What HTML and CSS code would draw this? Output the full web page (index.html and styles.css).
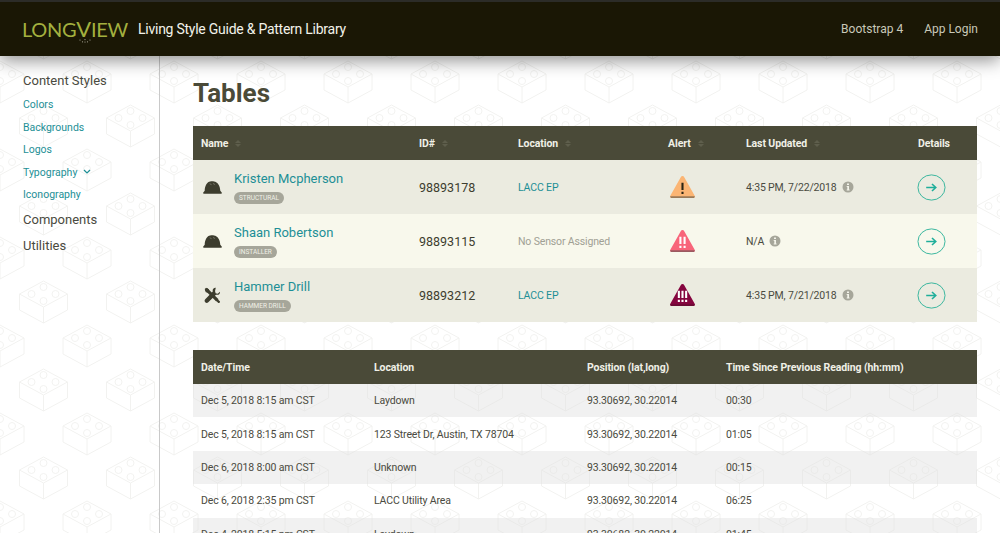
FILE: index.html
```html
<!DOCTYPE html>
<html lang="en">
<head>
<meta charset="utf-8">
<title>Longview Tables</title>
<link rel="stylesheet" href="styles.css">
</head>
<body>
<svg class="defs" width="0" height="0" aria-hidden="true">
  <defs>
    <symbol id="hat" viewBox="0 0 20 14">
      <path d="M1.800 10.500C1.800 5 4.600 1 7.500.7c.5-.4 3.500-.5 4 0C15.500 1.200 18 5 18.200 10.500l1.500 1.800c.4.600.1 1.200-.6 1.200H.9c-.7 0-1-.6-.6-1.200z" fill="#3d3d2e"/>
      <path d="M7 3l2 1M10.500 2.700l2.200 1.200" stroke="#8a8a7c" stroke-width=".7" fill="none"/>
    </symbol>
    <symbol id="tools" viewBox="0 0 18 18">
      <path d="M2.200 2.200l12 12" stroke="#3d3d2e" stroke-width="3.400" fill="none"/>
      <path d="M.8 2.200L2.200.8l3 1.700.3 3-.6.500-3-.4z" fill="#3d3d2e"/>
      <path d="M12.800 11.500l4 3.700c.5 1.200-.5 2.200-1.700 1.700l-3.700-4z" fill="#3d3d2e"/>
      <path d="M12.500.7c-2-.3-3.600 1.300-3.300 3.300l.1.800L1.300 13c-.9.900-.9 2.300 0 3.200.9.900 2.300.9 3.200 0l8.200-8 .9.100c2 .3 3.700-1.400 3.300-3.400l-2.400 2.200-2.200-.6-.6-2.200z" fill="#3d3d2e"/>
    </symbol>
    <symbol id="info" viewBox="0 0 12 12">
      <circle cx="6" cy="6" r="5.500" fill="#a6a69a"/>
      <path d="M5 2.500h2v1.600H5zM4.700 5h2.300v3.500h.6v1H4.700v-1h.6V6h-.6z" fill="#f4f4ea"/>
    </symbol>
    <symbol id="go" viewBox="0 0 30 30" preserveAspectRatio="none">
      <circle cx="15" cy="15" r="14" fill="none" stroke="#2fb39a" stroke-width="1"/>
      <path d="M9.500 15h10M15.500 11l4 4-4 4" fill="none" stroke="#1fae9a" stroke-width="1.600"/>
    </symbol>
  </defs>
</svg>
<div class="app">
  <header class="topbar">
    <a class="logo" href="#">LONG<span class="logo-v">V</span>IEW<svg class="logo-dots" viewBox="0 0 12 4" width="12" height="4"><g fill="#a8a89a"><circle cx="1" cy="1" r=".6"/><circle cx="3.500" cy="2.800" r=".6"/><circle cx="6" cy="3" r=".6"/><circle cx="8.500" cy="2.800" r=".6"/><circle cx="11" cy="1" r=".6"/><circle cx="6" cy=".6" r=".6"/></g></svg></a>
    <span class="tagline">Living Style Guide &amp; Pattern Library</span>
    <nav class="topnav">
      <a href="#">Bootstrap 4</a>
      <a href="#">App Login</a>
    </nav>
  </header>
  <div class="body-row">
    <aside class="sidebar">
      <a class="nav-head" href="#">Content Styles</a>
      <ul class="subnav">
        <li><a href="#">Colors</a></li>
        <li><a href="#">Backgrounds</a></li>
        <li><a href="#">Logos</a></li>
        <li><a href="#">Typography<svg class="chev" viewBox="0 0 8 5" width="8" height="5"><path d="M1 1l3 3 3-3" fill="none" stroke="#1d8f96" stroke-width="1.200"/></svg></a></li>
        <li><a href="#">Iconography</a></li>
      </ul>
      <a class="nav-head" href="#">Components</a>
      <a class="nav-head" href="#">Utilities</a>
    </aside>
    <main class="content">
      <h1>Tables</h1>
      <table class="tbl devices">
        <colgroup><col class="c1"><col class="c2"><col class="c3"><col class="c4"><col class="c5"><col class="c6"></colgroup>
        <thead>
          <tr>
            <th>Name<span class="sort"></span></th>
            <th>ID#<span class="sort"></span></th>
            <th>Location<span class="sort"></span></th>
            <th>Alert<span class="sort"></span></th>
            <th>Last Updated<span class="sort"></span></th>
            <th>Details</th>
          </tr>
        </thead>
        <tbody>
          <tr>
            <td><div class="who"><svg class="who-ico"><use href="#hat"/></svg><div><a class="who-name" href="#">Kristen Mcpherson</a><span class="tag">STRUCTURAL</span></div></div></td>
            <td class="idn">98893178</td>
            <td><a class="loc" href="#">LACC EP</a></td>
            <td><svg class="alert" viewBox="1 1.500 24 21.500"><path d="M13 1.500c.7 0 1.300.4 1.700 1.100l10 17.800c.5 1-.1 2.100-1.200 2.100H2.500c-1.100 0-1.700-1.100-1.200-2.100l10-17.800c.4-.7 1-1.100 1.700-1.100z" fill="#fbb574"/><path d="M1.100 20.800c.2.800.7 2.200 1.900 2.200h20c1.200 0 1.700-1.400 1.900-2.200z" fill="#9a7a58"/><path d="M12 8h2v7h-2zM12 16.500h2v2.200h-2z" fill="#2b2414"/></svg></td>
            <td class="when">4:35 PM, 7/22/2018<svg class="info"><use href="#info"/></svg></td>
            <td><svg class="go"><use href="#go"/></svg></td>
          </tr>
          <tr>
            <td><div class="who"><svg class="who-ico"><use href="#hat"/></svg><div><a class="who-name" href="#">Shaan Robertson</a><span class="tag">INSTALLER</span></div></div></td>
            <td class="idn">98893115</td>
            <td class="none">No Sensor Assigned</td>
            <td><svg class="alert" viewBox="1 1.500 24 21.500"><path d="M13 1.500c.7 0 1.300.4 1.700 1.100l10 17.800c.5 1-.1 2.100-1.200 2.100H2.500c-1.100 0-1.700-1.100-1.200-2.100l10-17.800c.4-.7 1-1.100 1.700-1.100z" fill="#f8657a"/><path d="M1.100 20.800c.2.800.7 2.200 1.900 2.200h20c1.200 0 1.700-1.400 1.900-2.200z" fill="#9a5a60"/><path d="M10 8h2v7h-2zM14 8h2v7h-2zM10 16.500h2v2.200h-2zM14 16.500h2v2.200h-2z" fill="#fff"/></svg></td>
            <td class="when">N/A<svg class="info"><use href="#info"/></svg></td>
            <td><svg class="go"><use href="#go"/></svg></td>
          </tr>
          <tr>
            <td><div class="who"><svg class="who-ico"><use href="#tools"/></svg><div><a class="who-name" href="#">Hammer Drill</a><span class="tag">HAMMER DRILL</span></div></div></td>
            <td class="idn">98893212</td>
            <td><a class="loc" href="#">LACC EP</a></td>
            <td><svg class="alert" viewBox="1 1.500 24 21.500"><path d="M13 1.500c.7 0 1.300.4 1.700 1.100l10 17.800c.5 1-.1 2.100-1.200 2.100H2.500c-1.100 0-1.700-1.100-1.200-2.100l10-17.800c.4-.7 1-1.100 1.700-1.100z" fill="#85053f"/><path d="M1.100 20.800c.2.800.7 2.200 1.900 2.200h20c1.200 0 1.700-1.400 1.900-2.200z" fill="#6b0a35"/><path d="M8.500 8h2v7h-2zM12 8h2v7h-2zM15.500 8h2v7h-2zM8.500 16.500h2v2.200h-2zM12 16.500h2v2.200h-2zM15.500 16.500h2v2.200h-2z" fill="#fff"/></svg></td>
            <td class="when">4:35 PM, 7/21/2018<svg class="info"><use href="#info"/></svg></td>
            <td><svg class="go"><use href="#go"/></svg></td>
          </tr>
        </tbody>
      </table>
      <table class="tbl readings">
        <colgroup><col class="r1"><col class="r2"><col class="r3"><col class="r4"></colgroup>
        <thead>
          <tr><th>Date/Time</th><th>Location</th><th>Position (lat,long)</th><th>Time Since Previous Reading (hh:mm)</th></tr>
        </thead>
        <tbody>
          <tr><td>Dec 5, 2018 8:15 am CST</td><td>Laydown</td><td>93.30692, 30.22014</td><td>00:30</td></tr>
          <tr><td>Dec 5, 2018 8:15 am CST</td><td>123 Street Dr, Austin, TX 78704</td><td>93.30692, 30.22014</td><td>01:05</td></tr>
          <tr><td>Dec 6, 2018 8:00 am CST</td><td>Unknown</td><td>93.30692, 30.22014</td><td>00:15</td></tr>
          <tr><td>Dec 6, 2018 2:35 pm CST</td><td>LACC Utility Area</td><td>93.30692, 30.22014</td><td>06:25</td></tr>
          <tr><td>Dec 4, 2018 5:15 pm CST</td><td>Laydown</td><td>93.30682, 30.22014</td><td>01:45</td></tr>
        </tbody>
      </table>
    </main>
  </div>
</div>
</body>
</html>
```
FILE: styles.css
```css
* { box-sizing: border-box; }
html, body { margin: 0; height: 100%; overflow: hidden; }
body {
  font-family: "Roboto", "Liberation Sans", sans-serif;
  color: #4a4a38;
  background-color: #fff;
  background-image: url("data:image/svg+xml,%3Csvg xmlns='http://www.w3.org/2000/svg' width='87' height='88' viewBox='0 0 87 88'%3E%3Cdefs%3E%3Cg id='b' fill='none' stroke='%23f2f2f0' stroke-width='1'%3E%3Cpath d='M-24-8L0-21L24-8V8L0 21L-24 8zM-24-8L0 5L24-8M0 5V21'/%3E%3Ccircle cx='0' cy='-15' r='3.500'/%3E%3Ccircle cx='-12' cy='-8' r='3.500'/%3E%3Ccircle cx='12' cy='-8' r='3.500'/%3E%3Ccircle cx='0' cy='-1' r='3.500'/%3E%3C/g%3E%3C/defs%3E%3Cuse href='%23b' x='43.500' y='38'/%3E%3Cuse href='%23b' x='0' y='82'/%3E%3Cuse href='%23b' x='87' y='82'/%3E%3Cuse href='%23b' x='0' y='-6'/%3E%3Cuse href='%23b' x='87' y='-6'/%3E%3C/svg%3E");
}
a { color: inherit; text-decoration: none; }
.defs { position: absolute; }
.app { height: 100vh; display: flex; flex-direction: column; overflow: hidden; }

.topbar {
  flex: none;
  position: relative;
  z-index: 2;
  height: 56px;
  display: flex;
  align-items: center;
  padding: 0 22px;
  background: #1a1705;
  border-top: 2px solid #2c2c28;
  box-shadow: 0 5px 16px rgba(0, 0, 0, .42);
}
.logo {
  position: relative;
  width: 116px;
  font-family: "Lato", sans-serif;
  font-size: 20px;
  letter-spacing: -.3px;
  color: #a3b03f;
}
.logo-v { font-size: 22px; line-height: 0; }
.logo-dots { position: absolute; left: 57px; top: 22px; }
.tagline { font-size: 14px; letter-spacing: -.25px; color: #f2f2ea; }
.topnav { margin-left: auto; display: flex; gap: 21px; font-size: 12px; color: #c9c9b9; }

.body-row { flex: 1; display: flex; min-height: 0; }
.sidebar {
  flex: none;
  width: 160px;
  padding: 12px 0 0 23px;
  border-right: 1px solid #c9c9c9;
}
.nav-head { display: block; font-size: 13px; line-height: 26px; color: #4a4a40; }
.subnav { list-style: none; margin: 0; padding: 0; font-size: 10.500px; color: #1d8f96; }
.subnav li { line-height: 22.500px; }
.chev { margin-left: 6px; vertical-align: 2px; }

.content { flex: 1; min-width: 0; padding: 21px 23px 0 33px; }
h1 { margin: 0 0 16px; font-size: 26px; line-height: 33px; font-weight: 700; color: #4a4a38; }

.tbl { width: 100%; table-layout: fixed; border-collapse: collapse; }
.tbl th {
  height: 34px;
  padding: 0 8px;
  text-align: left;
  font-size: 10.500px;
  letter-spacing: -.1px;
  font-weight: 700;
  color: #f0f0e6;
  background: #4a4a38;
}
.tbl td { padding: 0 8px; font-size: 10.500px; letter-spacing: -.15px; color: #4a4a40; }

.devices { margin-bottom: 28px; }
.c1 { width: 218px; } .c2 { width: 99px; } .c3 { width: 150px; }
.c4 { width: 78px; } .c5 { width: 172px; } .c6 { width: 67px; }
.devices td { height: 54px; }
.devices tbody tr:nth-child(odd) { background: #ebebe0; }
.devices tbody tr:nth-child(even) { background: #f8f8ec; }
.sort {
  display: inline-flex;
  flex-direction: column;
  gap: 1px;
  margin-left: 7px;
  vertical-align: middle;
}
.sort::before, .sort::after {
  content: "";
  border-left: 3px solid transparent;
  border-right: 3px solid transparent;
}
.sort::before { border-bottom: 3px solid #5e5e4c; }
.sort::after { border-top: 3px solid #5e5e4c; }
.who { display: flex; align-items: center; gap: 12px; padding-left: 2px; }
.who-ico { flex: none; width: 19px; height: 17px; }
.who-name { display: block; font-size: 13px; letter-spacing: 0; line-height: 17px; color: #1d8f96; }
.tag {
  display: inline-block;
  margin-top: 5px;
  padding: 0 5px;
  height: 12px;
  line-height: 12px;
  border-radius: 6px;
  font-size: 6.500px;
  letter-spacing: 0;
  color: #f0f0e6;
  background: #a6a69a;
}
.idn { font-size: 12.500px !important; letter-spacing: 0 !important; color: #3d3d2e !important; }
.loc { color: #1d8f96; }
.none { color: #a0a094 !important; }
.alert { display: block; width: 25px; height: 22.500px; margin-left: 2px; }
.info { width: 12px; height: 12px; margin-left: 5px; vertical-align: -2px; }
.go { display: block; width: 29px; height: 27px; margin-left: -1px; }

.r1 { width: 173px; } .r2 { width: 213px; } .r3 { width: 139px; } .r4 { width: 259px; }
.readings td { height: 33.400px; }
.readings tbody tr:nth-child(odd) { background: rgba(225, 225, 225, .45); }
```
